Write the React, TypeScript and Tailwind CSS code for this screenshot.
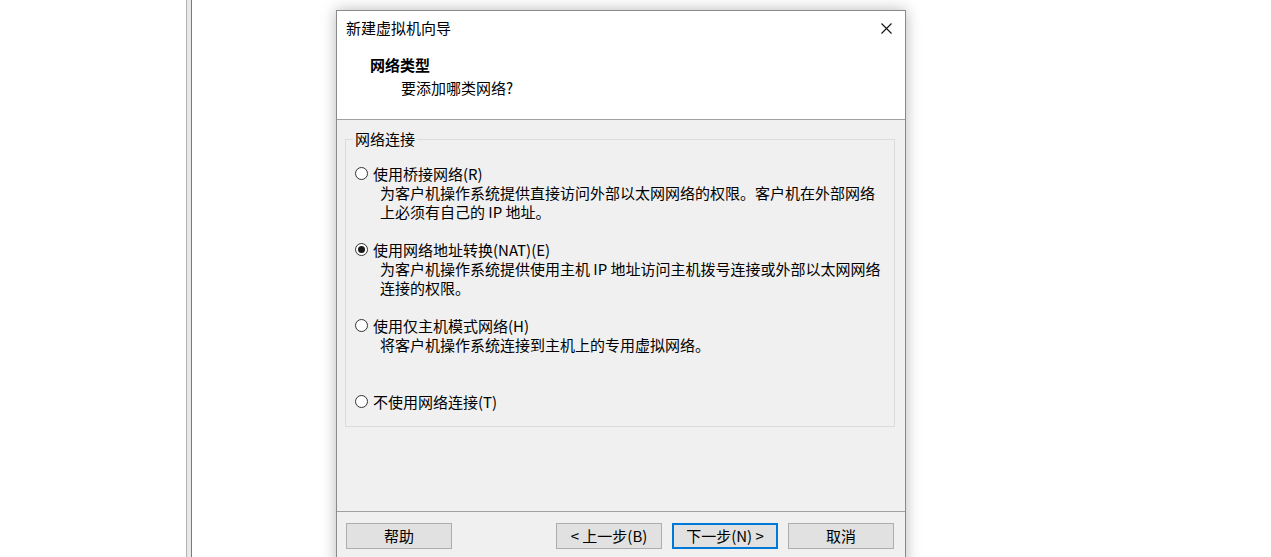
import React from "react"

const font = { fontFamily: '"Noto Sans CJK SC", "Liberation Sans", sans-serif' }

type Option = {
  label: string
  desc: string[]
  checked?: boolean
  gap: string
}

const options: Option[] = [
  {
    label: "使用桥接网络(R)",
    desc: ["为客户机操作系统提供直接访问外部以太网网络的权限。客户机在外部网络", "上必须有自己的 IP 地址。"],
    gap: "mt-0",
  },
  {
    label: "使用网络地址转换(NAT)(E)",
    desc: ["为客户机操作系统提供使用主机 IP 地址访问主机拨号连接或外部以太网网络", "连接的权限。"],
    checked: true,
    gap: "mt-[19px]",
  },
  {
    label: "使用仅主机模式网络(H)",
    desc: ["将客户机操作系统连接到主机上的专用虚拟网络。"],
    gap: "mt-[19px]",
  },
  {
    label: "不使用网络连接(T)",
    desc: [],
    gap: "mt-[38px]",
  },
]

function Radio({ checked }: { checked?: boolean }) {
  return (
    <span className="flex h-[13px] w-[13px] shrink-0 items-center justify-center rounded-full border border-[#333] bg-white">
      {checked && <span className="h-[7px] w-[7px] rounded-full bg-[#1a1a1a]" />}
    </span>
  )
}

function Button({ children, primary }: { children: React.ReactNode; primary?: boolean }) {
  return (
    <div
      className={
        primary
          ? "flex h-[26px] w-[106px] items-center justify-center border-2 border-[#0078d7] bg-[#e1e1e1] text-[15px] leading-[20px]"
          : "flex h-[26px] w-[106px] items-center justify-center border border-[#adadad] bg-[#e1e1e1] text-[15px] leading-[20px]"
      }
    >
      {children}
    </div>
  )
}

export default function App() {
  return (
    <div className="flex h-[557px] w-[1271px] overflow-hidden bg-white text-black" style={font}>
      <div className="ml-[186px] h-full w-[6px] border-l border-r border-l-[#b4b4b4] border-r-[#7a7a7a] bg-[#e8e8e8]" />

      <div className="ml-[144px] mt-[10px] flex h-[560px] w-[570px] shrink-0 flex-col border border-[#8a8a8a] bg-[#f0f0f0] shadow-[0_0_14px_rgba(0,0,0,0.28)]">
        {/* header */}
        <div className="h-[109px] border-b border-[#a0a0a0] bg-white">
          <div className="flex items-center justify-between pl-[9px] pr-[13px] pt-[7px]">
            <span className="text-[15px] leading-[20px]">新建虚拟机向导</span>
            <svg width="11" height="11" viewBox="0 0 11 11" className="block">
              <path d="M0.5 0.5 L10.5 10.5 M10.5 0.5 L0.5 10.5" stroke="#111" strokeWidth="1.1" fill="none" />
            </svg>
          </div>
          <div className="mt-[17px] pl-[33px] text-[15px] font-bold leading-[20px]">网络类型</div>
          <div className="mt-[3px] pl-[64px] text-[15px] leading-[20px]">要添加哪类网络?</div>
        </div>

        {/* body */}
        <div className="h-[391px] pl-[8px] pr-[10px] pt-[9px]">
          <fieldset className="h-[298px] border border-[#dcdcdc] pl-[9px]">
            <legend className="ml-[-2px] px-[2px] text-[15px] leading-[20px]">网络连接</legend>
            <div className="pt-[15px]">
              {options.map((o) => (
                <div key={o.label} className={o.gap}>
                  <div className="flex items-center gap-[5px] text-[15px] leading-[19px]">
                    <Radio checked={o.checked} />
                    <span className="whitespace-nowrap">{o.label}</span>
                  </div>
                  {o.desc.map((d) => (
                    <div key={d} className="whitespace-nowrap pl-[25px] text-[15px] leading-[19px]">
                      {d}
                    </div>
                  ))}
                </div>
              ))}
            </div>
          </fieldset>
        </div>

        {/* footer */}
        <div className="flex items-start justify-between border-t border-[#a0a0a0] pl-[9px] pr-[11px] pt-[11px]">
          <Button>帮助</Button>
          <div className="flex gap-[10px]">
            <Button>&lt; 上一步(B)</Button>
            <Button primary>下一步(N) &gt;</Button>
            <Button>取消</Button>
          </div>
        </div>
      </div>
    </div>
  )
}
